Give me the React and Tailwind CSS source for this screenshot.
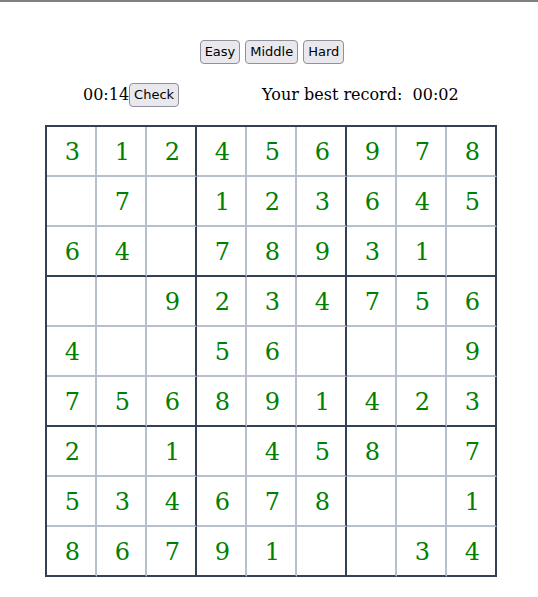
import React from 'react';

const board = [
  [3, 1, 2, 4, 5, 6, 9, 7, 8],
  [0, 7, 0, 1, 2, 3, 6, 4, 5],
  [6, 4, 0, 7, 8, 9, 3, 1, 0],
  [0, 0, 9, 2, 3, 4, 7, 5, 6],
  [4, 0, 0, 5, 6, 0, 0, 0, 9],
  [7, 5, 6, 8, 9, 1, 4, 2, 3],
  [2, 0, 1, 0, 4, 5, 8, 0, 7],
  [5, 3, 4, 6, 7, 8, 0, 0, 1],
  [8, 6, 7, 9, 1, 0, 0, 3, 4],
];

const btn =
  "font-['DejaVu_Sans',sans-serif] text-[13px] leading-[16px] bg-[#e9e9ed] border border-[#8f8f9d] rounded-[4px] px-[4px] py-[3px] text-black";

const Cell = ({ value, row, col }) => {
  const right = col === 2 || col === 5 || col === 8 ? 'border-r-[#334155]' : 'border-r-[#b8bfcc]';
  const bottom = row === 2 || row === 5 || row === 8 ? 'border-b-[#334155]' : 'border-b-[#b8bfcc]';
  return (
    <div
      className={`w-[50px] h-[50px] border-r-2 border-b-2 ${right} ${bottom} flex items-center justify-center pl-[3px] pt-[2px] text-[24px] text-[#008000] font-['DejaVu_Serif',serif]`}
    >
      {value || ''}
    </div>
  );
};

export default function App() {
  return (
    <div className="w-[538px] h-[597px] bg-white border-t-2 border-[#808080] font-['DejaVu_Serif',serif]">
      <div className="flex justify-center gap-[5px] pt-[38px] pl-[6px]">
        <button className={btn}>Easy</button>
        <button className={btn}>Middle</button>
        <button className={btn}>Hard</button>
      </div>
      <div className="flex items-center mt-[18px] text-[16px] text-black">
        <div className="pl-[83px] flex items-center">
          <span>00:14</span>
          <button className={btn}>Check</button>
        </div>
        <div className="ml-[83px] pt-[1px]">Your best record:&nbsp; 00:02</div>
      </div>
      <div className="ml-[45px] mt-[18px] w-[452px] border-l-2 border-t-2 border-[#334155] grid grid-cols-9">
        {board.map((r, ri) =>
          r.map((v, ci) => <Cell key={`${ri}-${ci}`} value={v} row={ri} col={ci} />)
        )}
      </div>
    </div>
  );
}
